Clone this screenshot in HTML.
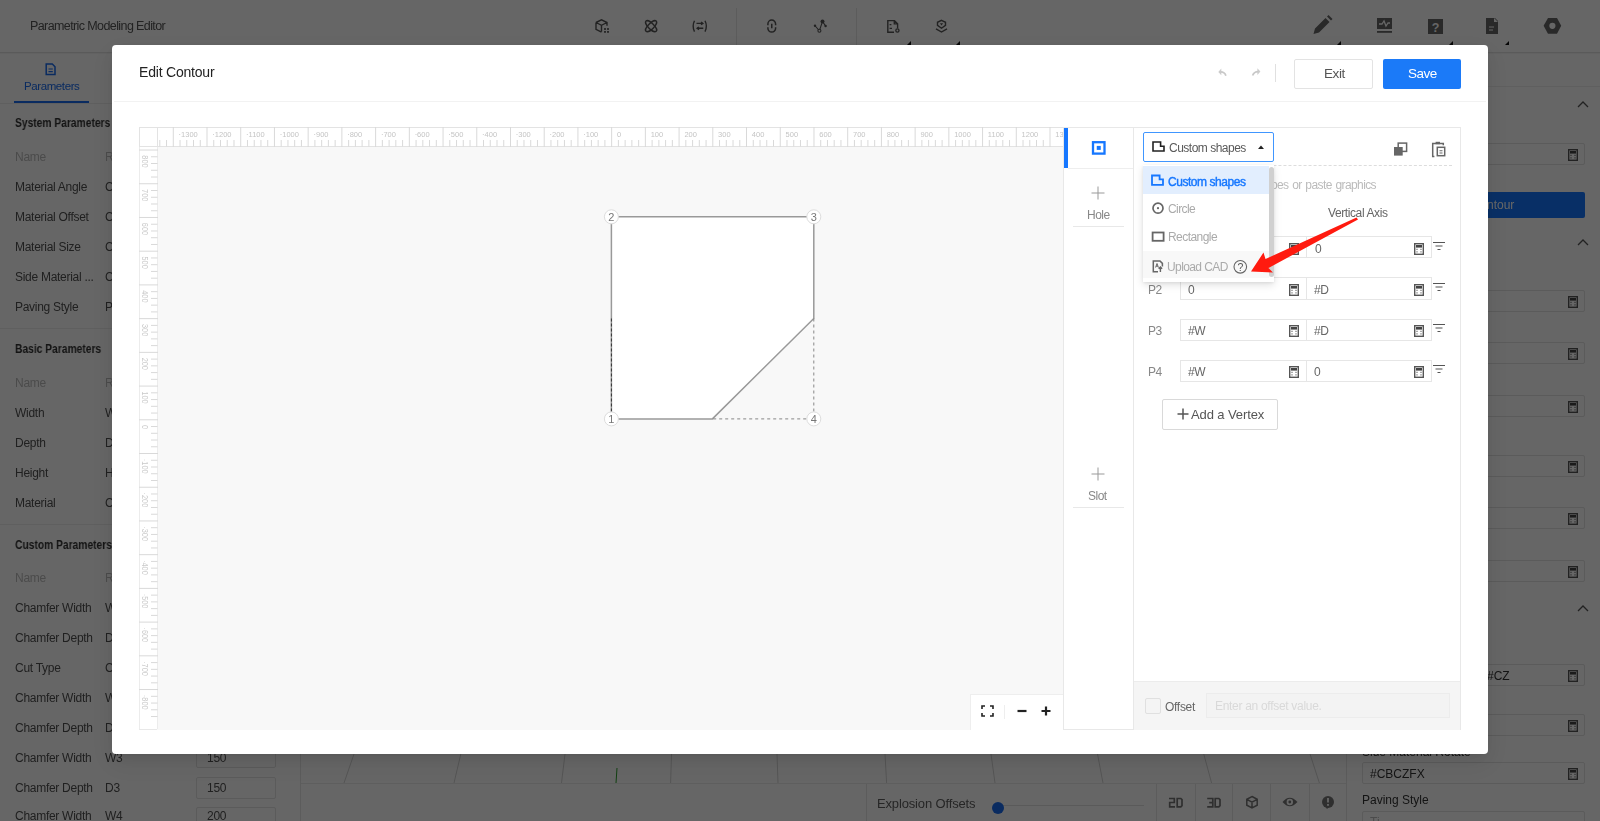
<!DOCTYPE html>
<html><head><meta charset="utf-8">
<style>
*{box-sizing:border-box;margin:0;padding:0}
html,body{width:1600px;height:821px;overflow:hidden;background:#fff;font-family:"Liberation Sans",sans-serif;color:#333}
.t{will-change:transform}
.a{position:absolute}
.t{position:absolute;white-space:nowrap;line-height:1}
#mask{position:absolute;left:0;top:0;width:1600px;height:821px;background:rgba(0,0,0,0.6)}
.lp .t{font-size:12px;letter-spacing:-0.28px;color:#505050}
.lp .g{color:#bbb}
.lp .b{font-weight:bold;letter-spacing:0;transform:scaleX(0.855);transform-origin:0 0;color:#333}
.inp{position:absolute;border:1px solid #e3e3e3;border-radius:2px;background:#fff}
.calc{position:absolute;width:9px;height:11.5px;border:1.4px solid #555;border-radius:0}
.calc:before{content:"";position:absolute;left:1px;top:1px;width:4.2px;height:2.6px;background:#444}
.calc:after{content:"";position:absolute;left:1px;top:5.5px;width:4px;height:2px;border-top:1px dotted #444;border-bottom:1px dotted #444}
</style></head><body>
<div id="bg">
  <!-- header -->
  <div class="a" style="left:0;top:0;width:1600px;height:53px;border-bottom:1px solid #e2e2e2;box-shadow:0 1px 1px rgba(0,0,0,0.04);background:#fff"></div>
  <div class="t" style="left:30px;top:20px;font-size:12.5px;letter-spacing:-0.6px;color:#555">Parametric Modeling Editor</div>
  <div class="a" style="left:736px;top:8px;width:1px;height:44px;background:#e6e6e6"></div>
  <div class="a" style="left:856px;top:8px;width:1px;height:44px;background:#e6e6e6"></div>
  <svg class="a" style="left:580px;top:10px" width="380" height="35" viewBox="0 0 380 35" fill="none" stroke="#555" stroke-width="1.6">
    <!-- cube -->
    <path d="M16 12.5 L21.5 9.8 L27 12.5 L27 15.8 M16 12.5 L16 19.3 L21.5 22.2 M16 12.5 L21.5 15.3 L27 12.5 M21.5 15.3 L21.5 21.5" stroke-width="1.4"/>
    <g fill="#555" stroke="none"><rect x="24.1" y="18.1" width="1.8" height="1.8"/><rect x="27.1" y="18.1" width="1.8" height="1.8"/><rect x="24.1" y="21" width="1.8" height="1.8"/><rect x="27.1" y="21" width="1.8" height="1.8"/></g>
    <!-- atom -->
    <ellipse cx="71.1" cy="16.2" rx="7.2" ry="2.9" transform="rotate(45 71.1 16.2)" stroke-width="1.4"/><ellipse cx="71.1" cy="16.2" rx="7.2" ry="2.9" transform="rotate(-45 71.1 16.2)" stroke-width="1.4"/>
    <!-- (=) -->
    <path d="M114.5 10.8 Q111.8 16.2 114.5 21.6 M125 10.8 Q127.7 16.2 125 21.6 M116.5 13.4 L123 13.4 M117 18.3 L123.3 18.3" stroke-width="1.4"/>
    <path d="M121 12 L123 13.4 L121 14.8 M119 16.9 L117 18.3 L119 19.7" stroke-width="1.2"/>
    <!-- link -->
    <path d="M187.9 15.2 V13.9 A3.85 3.85 0 0 1 195.6 13.9 V15.2 M187.9 17.2 V18.2 A3.85 3.85 0 0 0 195.6 18.2 V17.2 M191.75 13.8 V18.3" stroke-width="1.5"/>
    <!-- graph -->
    <path d="M235 15.75 L239.4 20.75 L242.5 11.4 L245.6 16" stroke-width="1.1"/><circle cx="242.5" cy="11.6" r="2" fill="#555" stroke="none"/><circle cx="235" cy="15.75" r="1.2" fill="#555" stroke="none"/><circle cx="245.6" cy="16" r="1.2" fill="#555" stroke="none"/><circle cx="239.4" cy="20.75" r="1.5" fill="#fff" stroke-width="1.1"/>
    <!-- doc -->
    <path d="M314 22.3 H307.8 V10.6 H314.5 L317.6 13.7 V18.2 M314.3 10.6 V13.9 H317.6" stroke-width="1.4"/><path d="M309.6 14.6 H311.4 M309.6 18.3 H312" stroke-width="1.3"/><circle cx="317.4" cy="20.5" r="1.6" stroke-width="1.3"/>
    <!-- layers -->
    <path d="M361.5 10.3 L365.5 12.3 L365.5 15.3 L361.5 18.2 L357.5 15.3 L357.5 12.3 Z" stroke-width="1.4"/><path d="M359.9 13.3 H363.1 L361.5 15.5 Z" fill="#555" stroke="none"/><path d="M356 18.8 L361.5 22 L367 18.8" stroke-width="1.4"/>
  </svg>
  <svg class="a" style="left:1300px;top:10px" width="300" height="35" viewBox="0 0 300 35">
    <path d="M13.5 24 L15 18.5 L25.5 8 L29.5 12 L19 22.5 Z M27 6.5 L28.5 5 L32.5 9 L31 10.5 Z" fill="#666"/>
    <rect x="77" y="8" width="15" height="11" fill="#666"/><path d="M79 14 L82 14 L84 11 L86 16 L88 13 L90 13" fill="none" stroke="#fff" stroke-width="1.3"/><rect x="77" y="21" width="15" height="1.8" fill="#666"/>
    <rect x="128" y="9" width="15" height="15" fill="#666"/><text x="135.5" y="21.5" font-size="12.5" font-weight="bold" fill="#fff" text-anchor="middle" font-family="Liberation Sans">?</text>
    <path d="M186 8 L195 8 L198 11 L198 24 L186 24 Z" fill="#666"/><path d="M189 17 L194 17 M189 20 L193 20" stroke="#fff" stroke-width="1"/><path d="M194 8 L198 12 L194 12 Z" fill="#fff"/>
    <path d="M243.6 15.8 L248 7.9 L257 7.9 L261.2 15.8 L257 23.7 L248 23.7 Z" fill="#666"/><circle cx="252.4" cy="15.8" r="3.1" fill="#fff"/>
  </svg>

  <div class="a" style="left:907px;top:41px;width:0;height:0;border-left:4px solid transparent;border-bottom:4px solid #111"></div><div class="a" style="left:956px;top:41px;width:0;height:0;border-left:4px solid transparent;border-bottom:4px solid #111"></div><div class="a" style="left:1337px;top:41px;width:0;height:0;border-left:4px solid transparent;border-bottom:4px solid #111"></div><div class="a" style="left:1449px;top:41px;width:0;height:0;border-left:4px solid transparent;border-bottom:4px solid #111"></div><div class="a" style="left:1505px;top:41px;width:0;height:0;border-left:4px solid transparent;border-bottom:4px solid #111"></div>
  <!-- left panel -->
  <div class="lp">
    <div class="a" style="left:300px;top:53px;width:1px;height:768px;background:#e6e6e6"></div>
    <svg class="a" style="left:44px;top:62px" width="14" height="14" viewBox="0 0 14 14" fill="none" stroke="#1a6cf0" stroke-width="1.5">
      <path d="M2.2 2 L8.3 2 L11 4.7 L11 12.6 L2.2 12.6 Z"/><path d="M4.5 7 L8.8 7 M4.5 9.7 L8.8 9.7" stroke-width="1.2"/>
    </svg>
    <div class="t" style="left:24px;top:81px;font-size:11.5px;letter-spacing:-0.4px;color:#1a6cf0">Parameters</div>
    <div class="a" style="left:14px;top:101px;width:75px;height:2px;background:#1a6cf0"></div>
    <div class="a" style="left:0;top:103px;width:300px;height:1px;background:#eee"></div>

    <div class="t b" style="left:15px;top:117px">System Parameters</div>
    <div class="t g" style="left:15px;top:151px">Name</div><div class="t g" style="left:105px;top:151px">R</div>
    <div class="t" style="left:15px;top:181px">Material Angle</div><div class="t" style="left:105px;top:181px">C</div>
    <div class="t" style="left:15px;top:211px">Material Offset</div><div class="t" style="left:105px;top:211px">C</div>
    <div class="t" style="left:15px;top:241px">Material Size</div><div class="t" style="left:105px;top:241px">C</div>
    <div class="t" style="left:15px;top:271px">Side Material ...</div><div class="t" style="left:105px;top:271px">C</div>
    <div class="t" style="left:15px;top:301px">Paving Style</div><div class="t" style="left:105px;top:301px">P</div>
    <div class="a" style="left:0;top:328px;width:300px;height:1px;background:#eee"></div>
    <div class="t b" style="left:15px;top:343px">Basic Parameters</div>
    <div class="t g" style="left:15px;top:377px">Name</div><div class="t g" style="left:105px;top:377px">R</div>
    <div class="t" style="left:15px;top:407px">Width</div><div class="t" style="left:105px;top:407px">W</div>
    <div class="t" style="left:15px;top:437px">Depth</div><div class="t" style="left:105px;top:437px">D</div>
    <div class="t" style="left:15px;top:467px">Height</div><div class="t" style="left:105px;top:467px">H</div>
    <div class="t" style="left:15px;top:497px">Material</div><div class="t" style="left:105px;top:497px">C</div>
    <div class="a" style="left:0;top:524px;width:300px;height:1px;background:#eee"></div>
    <div class="t b" style="left:15px;top:539px">Custom Parameters</div>
    <div class="t g" style="left:15px;top:572px">Name</div><div class="t g" style="left:105px;top:572px">R</div>
    <div class="t" style="left:15px;top:602px">Chamfer Width</div><div class="t" style="left:105px;top:602px">W</div>
    <div class="t" style="left:15px;top:632px">Chamfer Depth</div><div class="t" style="left:105px;top:632px">D</div>
    <div class="t" style="left:15px;top:662px">Cut Type</div><div class="t" style="left:105px;top:662px">C</div>
    <div class="t" style="left:15px;top:692px">Chamfer Width</div><div class="t" style="left:105px;top:692px">W</div>
    <div class="t" style="left:15px;top:722px">Chamfer Depth</div><div class="t" style="left:105px;top:722px">D</div>
    <div class="t" style="left:15px;top:752px">Chamfer Width</div><div class="t" style="left:105px;top:752px">W3</div>
    <div class="inp" style="left:196px;top:746px;width:80px;height:22px"></div><div class="t" style="left:207px;top:752px">150</div>
    <div class="t" style="left:15px;top:782px">Chamfer Depth</div><div class="t" style="left:105px;top:782px">D3</div>
    <div class="inp" style="left:196px;top:777px;width:80px;height:22px"></div><div class="t" style="left:207px;top:782px">150</div>
    <div class="t" style="left:15px;top:810px">Chamfer Width</div><div class="t" style="left:105px;top:810px">W4</div>
    <div class="inp" style="left:196px;top:807px;width:80px;height:22px"></div><div class="t" style="left:207px;top:810px">200</div>
  </div>

  <!-- center 3D bottom -->
  <svg class="a" style="left:301px;top:754px" width="1045" height="30" viewBox="0 0 1045 30" fill="none" stroke="#d4d4d4" stroke-width="1">
    <path d="M53 0 L43 29 M159.8 0 L153 29 M264 0 L260.5 29 M370.5 0 L369.6 29 M476 0 L477 29 M584 0 L585.6 29 M690 0 L694 29 M796.5 0 L802 29 M902.75 0 L910.6 29 M1009 0 L1018.4 29"/>
    <path d="M316 14 L315 29" stroke="#2aa02a"/>
  </svg>
  <div class="a" style="left:301px;top:783px;width:1045px;height:1px;background:#eaeaea"></div>
  <div class="a" style="left:866px;top:784px;width:480px;height:37px;border-left:1px solid #e6e6e6;background:#fff"></div>
  <div class="t" style="left:877px;top:797px;font-size:13px;letter-spacing:-0.15px;color:#606060">Explosion Offsets</div>
  <div class="a" style="left:997px;top:805px;width:147px;height:1px;background:#e0e0e0"></div>
  <div class="a" style="left:992px;top:802px;width:11.5px;height:11.5px;border-radius:6px;background:#1a6cf0"></div>
  <div class="a" style="left:1156px;top:784px;width:1px;height:37px;background:#e6e6e6"></div>
  <div class="a" style="left:1195px;top:784px;width:1px;height:37px;background:#e6e6e6"></div>
  <div class="a" style="left:1232px;top:784px;width:1px;height:37px;background:#e6e6e6"></div>
  <div class="a" style="left:1270px;top:784px;width:1px;height:37px;background:#e6e6e6"></div>
  <div class="a" style="left:1309px;top:784px;width:1px;height:37px;background:#e6e6e6"></div>
  <svg class="a" style="left:1150px;top:785px" width="80" height="36" viewBox="1150 785 80 36" fill="none" stroke="#777" stroke-width="1.7">
    <path d="M1169 798.5 H1174.3 V802.5 H1169.7 V806.8 H1175"/><path d="M1177.2 798.5 H1180.8 L1182 799.7 V805.6 L1180.8 806.8 H1177.2 Z"/>
    <path d="M1207.2 798.5 H1212.8 V806.8 H1207.2 M1209.2 802.6 H1212.8"/><path d="M1215.2 798.5 H1218.8 L1220 799.7 V805.6 L1218.8 806.8 H1215.2 Z"/>
  </svg>

  <!-- right panel -->
  <div class="a" style="left:1346px;top:53px;width:1px;height:768px;background:#e6e6e6"></div>
  <div class="a" style="left:1347px;top:86px;width:253px;height:1px;background:#eee"></div>
  <div class="inp" style="left:1362px;top:143px;width:223px;height:22px"></div>
  <div class="a" style="left:1362px;top:192px;width:223px;height:26px;background:#1677ff;border-radius:2px"></div>
  <div class="t" style="left:1487px;top:199px;font-size:12px;color:#fff">ntour</div>
  <div class="inp" style="left:1362px;top:290px;width:223px;height:22px"></div>
  <div class="inp" style="left:1362px;top:342px;width:223px;height:22px"></div>
  <div class="inp" style="left:1362px;top:395px;width:223px;height:22px"></div>
  <div class="inp" style="left:1362px;top:455px;width:223px;height:22px"></div>
  <div class="inp" style="left:1362px;top:507px;width:223px;height:22px"></div>
  <div class="inp" style="left:1362px;top:560px;width:223px;height:22px"></div>
  <div class="inp" style="left:1362px;top:664px;width:223px;height:22px"></div>
  <div class="t" style="left:1487px;top:670px;font-size:12px;color:#333">#CZ</div>
  <div class="inp" style="left:1362px;top:714px;width:223px;height:22px"></div>
  <div class="t" style="left:1362px;top:746px;font-size:12px;color:#333">Side Material Rotate</div>
  <div class="inp" style="left:1362px;top:762px;width:223px;height:22px"></div>
  <div class="t" style="left:1370px;top:768px;font-size:12px;color:#333">#CBCZFX</div>
  <div class="t" style="left:1362px;top:794px;font-size:12px;color:#333">Paving Style</div>
  <div class="inp" style="left:1362px;top:811px;width:223px;height:22px"></div>
  <svg class="a" style="left:1230px;top:790px" width="110" height="25" viewBox="0 0 110 25">
    <path d="M22 6.5 L27.2 9.3 L27.2 15.2 L22 18 L16.8 15.2 L16.8 9.3 Z M16.8 9.3 L22 12.1 L27.2 9.3 M22 12.1 L22 18" fill="none" stroke="#777" stroke-width="1.5"/>
    <path d="M52.5 12 Q59.7 3.5 67.5 12 Q59.7 20.5 52.5 12 Z" fill="#777"/><circle cx="59.8" cy="12" r="3.2" fill="#fff"/><circle cx="59.8" cy="12" r="1.4" fill="#777"/>
    <circle cx="98" cy="12" r="6" fill="#777"/><path d="M95 16 L97 19 L99 17 Z" fill="#777"/><rect x="97.1" y="8" width="1.8" height="4.5" fill="#fff"/><rect x="97.1" y="14" width="1.8" height="1.8" fill="#fff"/>
  </svg>
  <svg class="a" style="left:1561.5px;top:90px" width="40" height="540" viewBox="0 0 40 540" fill="none" stroke="#555" stroke-width="1.3">
    <path d="M16 17 L21 12 L26 17"/><path d="M16 155 L21 150 L26 155"/><path d="M16 521 L21 516 L26 521"/>
  </svg>
  <svg class="a" style="left:1568px;top:149px" width="10" height="12" viewBox="0 0 10 12"><rect x="0.7" y="0.7" width="8.6" height="10.6" fill="#fff" stroke="#555" stroke-width="1.4"/><rect x="2" y="2" width="6" height="2.6" fill="#444"/><path d="M2.3 6.4 h1.4 M6.3 6.4 h1.4 M2.3 8.8 h1.4 M6.3 8.8 h1.4" stroke="#888" stroke-width="1.2"/></svg>
  <svg class="a" style="left:1568px;top:296px" width="10" height="12" viewBox="0 0 10 12"><rect x="0.7" y="0.7" width="8.6" height="10.6" fill="#fff" stroke="#555" stroke-width="1.4"/><rect x="2" y="2" width="6" height="2.6" fill="#444"/><path d="M2.3 6.4 h1.4 M6.3 6.4 h1.4 M2.3 8.8 h1.4 M6.3 8.8 h1.4" stroke="#888" stroke-width="1.2"/></svg>
  <svg class="a" style="left:1568px;top:348px" width="10" height="12" viewBox="0 0 10 12"><rect x="0.7" y="0.7" width="8.6" height="10.6" fill="#fff" stroke="#555" stroke-width="1.4"/><rect x="2" y="2" width="6" height="2.6" fill="#444"/><path d="M2.3 6.4 h1.4 M6.3 6.4 h1.4 M2.3 8.8 h1.4 M6.3 8.8 h1.4" stroke="#888" stroke-width="1.2"/></svg>
  <svg class="a" style="left:1568px;top:401px" width="10" height="12" viewBox="0 0 10 12"><rect x="0.7" y="0.7" width="8.6" height="10.6" fill="#fff" stroke="#555" stroke-width="1.4"/><rect x="2" y="2" width="6" height="2.6" fill="#444"/><path d="M2.3 6.4 h1.4 M6.3 6.4 h1.4 M2.3 8.8 h1.4 M6.3 8.8 h1.4" stroke="#888" stroke-width="1.2"/></svg>
  <svg class="a" style="left:1568px;top:461px" width="10" height="12" viewBox="0 0 10 12"><rect x="0.7" y="0.7" width="8.6" height="10.6" fill="#fff" stroke="#555" stroke-width="1.4"/><rect x="2" y="2" width="6" height="2.6" fill="#444"/><path d="M2.3 6.4 h1.4 M6.3 6.4 h1.4 M2.3 8.8 h1.4 M6.3 8.8 h1.4" stroke="#888" stroke-width="1.2"/></svg>
  <svg class="a" style="left:1568px;top:513px" width="10" height="12" viewBox="0 0 10 12"><rect x="0.7" y="0.7" width="8.6" height="10.6" fill="#fff" stroke="#555" stroke-width="1.4"/><rect x="2" y="2" width="6" height="2.6" fill="#444"/><path d="M2.3 6.4 h1.4 M6.3 6.4 h1.4 M2.3 8.8 h1.4 M6.3 8.8 h1.4" stroke="#888" stroke-width="1.2"/></svg>
  <svg class="a" style="left:1568px;top:566px" width="10" height="12" viewBox="0 0 10 12"><rect x="0.7" y="0.7" width="8.6" height="10.6" fill="#fff" stroke="#555" stroke-width="1.4"/><rect x="2" y="2" width="6" height="2.6" fill="#444"/><path d="M2.3 6.4 h1.4 M6.3 6.4 h1.4 M2.3 8.8 h1.4 M6.3 8.8 h1.4" stroke="#888" stroke-width="1.2"/></svg>
  <svg class="a" style="left:1568px;top:670px" width="10" height="12" viewBox="0 0 10 12"><rect x="0.7" y="0.7" width="8.6" height="10.6" fill="#fff" stroke="#555" stroke-width="1.4"/><rect x="2" y="2" width="6" height="2.6" fill="#444"/><path d="M2.3 6.4 h1.4 M6.3 6.4 h1.4 M2.3 8.8 h1.4 M6.3 8.8 h1.4" stroke="#888" stroke-width="1.2"/></svg>
  <svg class="a" style="left:1568px;top:720px" width="10" height="12" viewBox="0 0 10 12"><rect x="0.7" y="0.7" width="8.6" height="10.6" fill="#fff" stroke="#555" stroke-width="1.4"/><rect x="2" y="2" width="6" height="2.6" fill="#444"/><path d="M2.3 6.4 h1.4 M6.3 6.4 h1.4 M2.3 8.8 h1.4 M6.3 8.8 h1.4" stroke="#888" stroke-width="1.2"/></svg>
  <svg class="a" style="left:1568px;top:768px" width="10" height="12" viewBox="0 0 10 12"><rect x="0.7" y="0.7" width="8.6" height="10.6" fill="#fff" stroke="#555" stroke-width="1.4"/><rect x="2" y="2" width="6" height="2.6" fill="#444"/><path d="M2.3 6.4 h1.4 M6.3 6.4 h1.4 M2.3 8.8 h1.4 M6.3 8.8 h1.4" stroke="#888" stroke-width="1.2"/></svg>
  <div class="t" style="left:1370px;top:816px;font-size:12px;color:#bbb">Ti</div>

</div>
<div id="mask"></div>

<div id="modal" class="a" style="left:112px;top:45px;width:1376px;height:709px;background:#fff;border-radius:4px;box-shadow:0 6px 16px rgba(0,0,0,0.08),0 3px 6px -4px rgba(0,0,0,0.12),0 9px 28px 8px rgba(0,0,0,0.05)"></div>
<div id="m">
  <div class="t" style="left:139px;top:65px;font-size:14px;letter-spacing:-0.2px;color:#222">Edit Contour</div>
  <div class="a" style="left:114px;top:101px;width:1372px;height:1px;background:#f2f2f2"></div>
  <svg class="a" style="left:1214px;top:64px" width="50" height="18" viewBox="0 0 50 18" fill="none" stroke="#c8c8c8" stroke-width="1.4">
    <path d="M4.3 7.9 L7.3 4.6 L7.3 11.2 Z" fill="#ccc" stroke="none"/><path d="M6.5 7.9 Q10.8 7.9 11.9 11.8" stroke-width="1.7"/>
    <path d="M46.4 7.6 L43.4 4.3 L43.4 10.9 Z" fill="#ccc" stroke="none"/><path d="M44.2 7.6 Q39.9 7.6 38.6 11.6" stroke-width="1.7"/>
  </svg>
  <div class="a" style="left:1275px;top:64px;width:1px;height:18px;background:#e0e0e0"></div>
  <div class="a" style="left:1294px;top:59px;width:79px;height:30px;border:1px solid #e3e3e3;border-radius:2px;background:#fff"></div>
  <div class="t" style="left:1324px;top:67px;font-size:13.5px;letter-spacing:-0.4px;color:#555">Exit</div>
  <div class="a" style="left:1383px;top:59px;width:78px;height:30px;border-radius:2px;background:#1b7af8"></div>
  <div class="t" style="left:1408px;top:67px;font-size:13.5px;letter-spacing:-0.5px;color:#fff">Save</div>

  <!-- canvas -->
  <div class="a" style="left:139px;top:127px;width:1322px;height:603px;border:1px solid #e8e8e8"></div>
  <div class="a" style="left:157px;top:147px;width:907px;height:583px;background:#f8f8f8"></div>
  <svg class="a" style="left:139px;top:127px" width="924" height="20" viewBox="0 0 924 20"><rect x="0" y="0" width="924" height="20" fill="#fff"/><path d="M0 0.5 H924 M0 19.5 H924" stroke="#e3e3e3" stroke-width="1"/><path d="M20.80 13 V19.5 M27.55 13 V19.5 M34.29 0 V20 M41.03 13 V19.5 M47.78 13 V19.5 M54.52 13 V19.5 M61.27 13 V19.5 M68.01 0 V20 M74.75 13 V19.5 M81.50 13 V19.5 M88.24 13 V19.5 M94.99 13 V19.5 M101.73 0 V20 M108.47 13 V19.5 M115.22 13 V19.5 M121.96 13 V19.5 M128.71 13 V19.5 M135.45 0 V20 M142.19 13 V19.5 M148.94 13 V19.5 M155.68 13 V19.5 M162.43 13 V19.5 M169.17 0 V20 M175.91 13 V19.5 M182.66 13 V19.5 M189.40 13 V19.5 M196.15 13 V19.5 M202.89 0 V20 M209.63 13 V19.5 M216.38 13 V19.5 M223.12 13 V19.5 M229.87 13 V19.5 M236.61 0 V20 M243.35 13 V19.5 M250.10 13 V19.5 M256.84 13 V19.5 M263.59 13 V19.5 M270.33 0 V20 M277.07 13 V19.5 M283.82 13 V19.5 M290.56 13 V19.5 M297.31 13 V19.5 M304.05 0 V20 M310.79 13 V19.5 M317.54 13 V19.5 M324.28 13 V19.5 M331.03 13 V19.5 M337.77 0 V20 M344.51 13 V19.5 M351.26 13 V19.5 M358.00 13 V19.5 M364.75 13 V19.5 M371.49 0 V20 M378.23 13 V19.5 M384.98 13 V19.5 M391.72 13 V19.5 M398.47 13 V19.5 M405.21 0 V20 M411.95 13 V19.5 M418.70 13 V19.5 M425.44 13 V19.5 M432.19 13 V19.5 M438.93 0 V20 M445.67 13 V19.5 M452.42 13 V19.5 M459.16 13 V19.5 M465.91 13 V19.5 M472.65 0 V20 M479.39 13 V19.5 M486.14 13 V19.5 M492.88 13 V19.5 M499.63 13 V19.5 M506.37 0 V20 M513.11 13 V19.5 M519.86 13 V19.5 M526.60 13 V19.5 M533.35 13 V19.5 M540.09 0 V20 M546.83 13 V19.5 M553.58 13 V19.5 M560.32 13 V19.5 M567.07 13 V19.5 M573.81 0 V20 M580.55 13 V19.5 M587.30 13 V19.5 M594.04 13 V19.5 M600.79 13 V19.5 M607.53 0 V20 M614.27 13 V19.5 M621.02 13 V19.5 M627.76 13 V19.5 M634.51 13 V19.5 M641.25 0 V20 M647.99 13 V19.5 M654.74 13 V19.5 M661.48 13 V19.5 M668.23 13 V19.5 M674.97 0 V20 M681.71 13 V19.5 M688.46 13 V19.5 M695.20 13 V19.5 M701.95 13 V19.5 M708.69 0 V20 M715.43 13 V19.5 M722.18 13 V19.5 M728.92 13 V19.5 M735.67 13 V19.5 M742.41 0 V20 M749.15 13 V19.5 M755.90 13 V19.5 M762.64 13 V19.5 M769.39 13 V19.5 M776.13 0 V20 M782.87 13 V19.5 M789.62 13 V19.5 M796.36 13 V19.5 M803.11 13 V19.5 M809.85 0 V20 M816.59 13 V19.5 M823.34 13 V19.5 M830.08 13 V19.5 M836.83 13 V19.5 M843.57 0 V20 M850.31 13 V19.5 M857.06 13 V19.5 M863.80 13 V19.5 M870.55 13 V19.5 M877.29 0 V20 M884.03 13 V19.5 M890.78 13 V19.5 M897.52 13 V19.5 M904.27 13 V19.5 M911.01 0 V20" stroke="#d9d9d9" stroke-width="1"/><g font-family="Liberation Sans" font-size="7.5" fill="#c4c4c4"><text x="39.59" y="9.5" >·1300</text><text x="73.31" y="9.5" >·1200</text><text x="107.03" y="9.5" >·1100</text><text x="140.75" y="9.5" >·1000</text><text x="174.47" y="9.5" >·900</text><text x="208.19" y="9.5" >·800</text><text x="241.91" y="9.5" >·700</text><text x="275.63" y="9.5" >·600</text><text x="309.35" y="9.5" >·500</text><text x="343.07" y="9.5" >·400</text><text x="376.79" y="9.5" >·300</text><text x="410.51" y="9.5" >·200</text><text x="444.23" y="9.5" >·100</text><text x="477.95" y="9.5" >0</text><text x="511.67" y="9.5" >100</text><text x="545.39" y="9.5" >200</text><text x="579.11" y="9.5" >300</text><text x="612.83" y="9.5" >400</text><text x="646.55" y="9.5" >500</text><text x="680.27" y="9.5" >600</text><text x="713.99" y="9.5" >700</text><text x="747.71" y="9.5" >800</text><text x="781.43" y="9.5" >900</text><text x="815.15" y="9.5" >1000</text><text x="848.87" y="9.5" >1100</text><text x="882.59" y="9.5" >1200</text><text x="916.31" y="9.5" >1300</text></g><rect x="0" y="0" width="18.5" height="20" fill="#fff"/><path d="M0.5 0 V20 M18.5 0 V20 M0 0.5 H19 M0 19.5 H19" stroke="#e3e3e3"/></svg>
  <svg class="a" style="left:139px;top:147px" width="19" height="582" viewBox="0 0 19 582"><rect x="0" y="0" width="19" height="582" fill="#fff"/><path d="M0.5 0 V582 M18.5 0 V582" stroke="#ececec" stroke-width="1"/><path d="M0 542.56 H19 M12 549.30 H18.5 M12 556.05 H18.5 M12 562.79 H18.5 M12 569.54 H18.5 M0 508.84 H19 M12 515.58 H18.5 M12 522.33 H18.5 M12 529.07 H18.5 M12 535.82 H18.5 M0 475.12 H19 M12 481.86 H18.5 M12 488.61 H18.5 M12 495.35 H18.5 M12 502.10 H18.5 M0 441.40 H19 M12 448.14 H18.5 M12 454.89 H18.5 M12 461.63 H18.5 M12 468.38 H18.5 M0 407.68 H19 M12 414.42 H18.5 M12 421.17 H18.5 M12 427.91 H18.5 M12 434.66 H18.5 M0 373.96 H19 M12 380.70 H18.5 M12 387.45 H18.5 M12 394.19 H18.5 M12 400.94 H18.5 M0 340.24 H19 M12 346.98 H18.5 M12 353.73 H18.5 M12 360.47 H18.5 M12 367.22 H18.5 M0 306.52 H19 M12 313.26 H18.5 M12 320.01 H18.5 M12 326.75 H18.5 M12 333.50 H18.5 M0 272.80 H19 M12 279.54 H18.5 M12 286.29 H18.5 M12 293.03 H18.5 M12 299.78 H18.5 M0 239.08 H19 M12 245.82 H18.5 M12 252.57 H18.5 M12 259.31 H18.5 M12 266.06 H18.5 M0 205.36 H19 M12 212.10 H18.5 M12 218.85 H18.5 M12 225.59 H18.5 M12 232.34 H18.5 M0 171.64 H19 M12 178.38 H18.5 M12 185.13 H18.5 M12 191.87 H18.5 M12 198.62 H18.5 M0 137.92 H19 M12 144.66 H18.5 M12 151.41 H18.5 M12 158.15 H18.5 M12 164.90 H18.5 M0 104.20 H19 M12 110.94 H18.5 M12 117.69 H18.5 M12 124.43 H18.5 M12 131.18 H18.5 M0 70.48 H19 M12 77.22 H18.5 M12 83.97 H18.5 M12 90.71 H18.5 M12 97.46 H18.5 M0 36.76 H19 M12 43.50 H18.5 M12 50.25 H18.5 M12 56.99 H18.5 M12 63.74 H18.5 M0 3.04 H19 M12 9.78 H18.5 M12 16.53 H18.5 M12 23.27 H18.5 M12 30.02 H18.5" stroke="#d9d9d9" stroke-width="1"/><g font-family="Liberation Sans" font-size="8.8" fill="#cacaca"><text transform="translate(2.6 547.86) rotate(90) scale(0.84 1)">·800</text><text transform="translate(2.6 514.14) rotate(90) scale(0.84 1)">·700</text><text transform="translate(2.6 480.42) rotate(90) scale(0.84 1)">·600</text><text transform="translate(2.6 446.70) rotate(90) scale(0.84 1)">·500</text><text transform="translate(2.6 412.98) rotate(90) scale(0.84 1)">·400</text><text transform="translate(2.6 379.26) rotate(90) scale(0.84 1)">·300</text><text transform="translate(2.6 345.54) rotate(90) scale(0.84 1)">·200</text><text transform="translate(2.6 311.82) rotate(90) scale(0.84 1)">·100</text><text transform="translate(2.6 278.10) rotate(90) scale(0.84 1)">0</text><text transform="translate(2.6 244.38) rotate(90) scale(0.84 1)">100</text><text transform="translate(2.6 210.66) rotate(90) scale(0.84 1)">200</text><text transform="translate(2.6 176.94) rotate(90) scale(0.84 1)">300</text><text transform="translate(2.6 143.22) rotate(90) scale(0.84 1)">400</text><text transform="translate(2.6 109.50) rotate(90) scale(0.84 1)">500</text><text transform="translate(2.6 75.78) rotate(90) scale(0.84 1)">600</text><text transform="translate(2.6 42.06) rotate(90) scale(0.84 1)">700</text><text transform="translate(2.6 8.34) rotate(90) scale(0.84 1)">800</text></g></svg>
  <svg class="a" style="left:580px;top:190px" width="260" height="250" viewBox="0 0 260 250">
    <path d="M31.4 228.9 L31.4 26.8 L233.8 26.8 L233.8 128.5 L132.4 228.9 Z" fill="#fff" stroke="#999" stroke-width="1.5"/>
    <path d="M233.8 128.5 L233.8 228.9 L132.4 228.9" fill="none" stroke="#888" stroke-width="1" stroke-dasharray="3 3"/>
    <path d="M31.4 128.5 L31.4 228.9" fill="none" stroke="#333" stroke-width="1" stroke-dasharray="3 2"/>
    <g fill="#fff" stroke="#ddd" stroke-width="1">
      <circle cx="31.4" cy="26.8" r="7"/><circle cx="233.8" cy="26.8" r="7"/><circle cx="31.4" cy="228.9" r="7"/><circle cx="233.8" cy="228.9" r="7"/>
    </g>
    <g font-family="Liberation Sans" font-size="11" fill="#777" text-anchor="middle">
      <text x="31.4" y="30.8">2</text><text x="233.8" y="30.8">3</text><text x="31.4" y="232.9">1</text><text x="233.8" y="232.9">4</text>
    </g>
  </svg>
  <!-- zoom controls -->
  <div class="a" style="left:970px;top:694px;width:94px;height:36px;background:#fff;border-top:1px solid #eee;border-left:1px solid #eee"></div>
  <svg class="a" style="left:970px;top:694px" width="94" height="36" viewBox="0 0 94 36" fill="none" stroke="#222" stroke-width="1.6">
    <path d="M12 15 V12 H15 M20 12 H23 V15 M23 19 V22 H20 M15 22 H12 V19"/>
    <path d="M34.5 11 V25" stroke="#eee" stroke-width="1"/>
    <path d="M47.5 17 H56.5" stroke-width="2.2"/>
    <path d="M71.5 17 H80.5 M76 12.5 V21.5" stroke-width="2.2"/>
  </svg>

  <!-- tool strip -->
  <div class="a" style="left:1063px;top:127px;width:1px;height:603px;background:#e8e8e8"></div>
  <div class="a" style="left:1133px;top:127px;width:1px;height:603px;background:#e8e8e8"></div>
  <div class="a" style="left:1064px;top:128px;width:4px;height:40px;background:#1677ff"></div>
  <div class="a" style="left:1068px;top:168px;width:65px;height:1px;background:#eee"></div>
  <svg class="a" style="left:1090px;top:140px" width="16" height="16" viewBox="0 0 16 16">
    <rect x="3" y="2.2" width="11.5" height="11.4" fill="none" stroke="#1677ff" stroke-width="2.3"/>
    <rect x="6.75" y="5.9" width="4" height="4" fill="#1677ff"/>
  </svg>
  <svg class="a" style="left:1090px;top:185px" width="16" height="16" viewBox="0 0 16 16"><path d="M8 1.5 V14.5 M1.5 8 H14.5" stroke="#999" stroke-width="1"/></svg>
  <div class="t" style="left:1087px;top:209px;font-size:12px;letter-spacing:-0.5px;color:#888">Hole</div>
  <div class="a" style="left:1073px;top:226px;width:51px;height:1px;background:#e8e8e8"></div>
  <svg class="a" style="left:1090px;top:466px" width="16" height="16" viewBox="0 0 16 16"><path d="M8 1.5 V14.5 M1.5 8 H14.5" stroke="#999" stroke-width="1"/></svg>
  <div class="t" style="left:1088px;top:490px;font-size:12px;letter-spacing:-0.5px;color:#888">Slot</div>
  <div class="a" style="left:1073px;top:507px;width:51px;height:1px;background:#e8e8e8"></div>

  <!-- right form -->
  <div class="a" style="left:1143px;top:132px;width:131px;height:30px;border:1px solid #4096ff;border-radius:2px;background:#fff"></div>
  <svg class="a" style="left:1151px;top:140px" width="16" height="14" viewBox="0 0 16 14" fill="none" stroke="#222" stroke-width="1.6">
    <path d="M2 2 H9.6 V6.2 H13 V11 H2 Z"/>
  </svg>
  <div class="t" style="left:1169px;top:142px;font-size:12px;letter-spacing:-0.5px;color:#595959">Custom shapes</div>
  <svg class="a" style="left:1256px;top:143px" width="10" height="8" viewBox="0 0 10 8"><path d="M2 6 L5 2.5 L8 6 Z" fill="#222"/></svg>

  <svg class="a" style="left:1390px;top:138px" width="60" height="22" viewBox="0 0 60 22">
    <rect x="8.2" y="5.1" width="8.4" height="8.3" fill="none" stroke="#666" stroke-width="1.5"/>
    <rect x="4" y="9" width="8.7" height="8.6" fill="#666"/>
    <path d="M44.4 18.4 H42.7 V5.4 H53.3 V7.2" fill="none" stroke="#666" stroke-width="1.5"/><rect x="45.6" y="3.8" width="4.4" height="2.4" fill="#666"/>
    <rect x="47.3" y="9.3" width="7.4" height="8.4" fill="#fff" stroke="#666" stroke-width="1.5"/><path d="M49.5 12.7 H52.5 M49.5 15 H52.5" stroke="#666" stroke-width="1.1"/>
  </svg>
  <div class="a" style="left:1143px;top:165px;width:309px;height:0;border-top:1px dashed #ddd"></div>
  <div class="t" style="right:224px;top:179px;font-size:12px;letter-spacing:-0.6px;word-spacing:1px;color:#bbb">Draw shapes or paste graphics</div>
  <div class="t" style="left:1328px;top:207px;font-size:12px;letter-spacing:-0.4px;color:#666">Vertical Axis</div>

  <div class="t" style="left:1148px;top:243px;font-size:12px;color:#888">P1</div>
  <div class="inp" style="left:1180px;top:236px;width:127px;height:22px;border-color:#e6e6e6;border-radius:0"></div>
  <div class="inp" style="left:1306px;top:236px;width:126px;height:22px;border-color:#e6e6e6;border-radius:0"></div>
  <div class="t" style="left:1315px;top:243px;font-size:12px;color:#666">0</div>

  <div class="t" style="left:1148px;top:284px;font-size:12px;letter-spacing:-0.4px;color:#888">P2</div>
  <div class="inp" style="left:1180px;top:277px;width:127px;height:23px;border-color:#e6e6e6;border-radius:0"></div>
  <div class="inp" style="left:1306px;top:277px;width:126px;height:23px;border-color:#e6e6e6;border-radius:0"></div>
  <div class="t" style="left:1188px;top:284px;font-size:12px;color:#666">0</div>
  <div class="t" style="left:1314px;top:284px;font-size:12px;letter-spacing:-0.4px;color:#666">#D</div>

  <div class="t" style="left:1148px;top:325px;font-size:12px;letter-spacing:-0.4px;color:#888">P3</div>
  <div class="inp" style="left:1180px;top:319px;width:127px;height:22px;border-color:#e6e6e6;border-radius:0"></div>
  <div class="inp" style="left:1306px;top:319px;width:126px;height:22px;border-color:#e6e6e6;border-radius:0"></div>
  <div class="t" style="left:1188px;top:325px;font-size:12px;letter-spacing:-0.4px;color:#666">#W</div>
  <div class="t" style="left:1314px;top:325px;font-size:12px;letter-spacing:-0.4px;color:#666">#D</div>

  <div class="t" style="left:1148px;top:366px;font-size:12px;letter-spacing:-0.4px;color:#888">P4</div>
  <div class="inp" style="left:1180px;top:360px;width:127px;height:22px;border-color:#e6e6e6;border-radius:0"></div>
  <div class="inp" style="left:1306px;top:360px;width:126px;height:22px;border-color:#e6e6e6;border-radius:0"></div>
  <div class="t" style="left:1188px;top:366px;font-size:12px;letter-spacing:-0.4px;color:#666">#W</div>
  <div class="t" style="left:1314px;top:366px;font-size:12px;color:#666">0</div>

  <svg class="a" style="left:1289px;top:243px" width="10" height="12" viewBox="0 0 10 12"><rect x="0.7" y="0.7" width="8.6" height="10.6" fill="#fff" stroke="#555" stroke-width="1.4"/><rect x="2" y="2" width="6" height="2.6" fill="#444"/><path d="M2.3 6.4 h1.4 M6.3 6.4 h1.4 M2.3 8.8 h1.4 M6.3 8.8 h1.4" stroke="#888" stroke-width="1.2"/></svg><svg class="a" style="left:1414px;top:243px" width="10" height="12" viewBox="0 0 10 12"><rect x="0.7" y="0.7" width="8.6" height="10.6" fill="#fff" stroke="#555" stroke-width="1.4"/><rect x="2" y="2" width="6" height="2.6" fill="#444"/><path d="M2.3 6.4 h1.4 M6.3 6.4 h1.4 M2.3 8.8 h1.4 M6.3 8.8 h1.4" stroke="#888" stroke-width="1.2"/></svg>
  <svg class="a" style="left:1289px;top:284px" width="10" height="12" viewBox="0 0 10 12"><rect x="0.7" y="0.7" width="8.6" height="10.6" fill="#fff" stroke="#555" stroke-width="1.4"/><rect x="2" y="2" width="6" height="2.6" fill="#444"/><path d="M2.3 6.4 h1.4 M6.3 6.4 h1.4 M2.3 8.8 h1.4 M6.3 8.8 h1.4" stroke="#888" stroke-width="1.2"/></svg><svg class="a" style="left:1414px;top:284px" width="10" height="12" viewBox="0 0 10 12"><rect x="0.7" y="0.7" width="8.6" height="10.6" fill="#fff" stroke="#555" stroke-width="1.4"/><rect x="2" y="2" width="6" height="2.6" fill="#444"/><path d="M2.3 6.4 h1.4 M6.3 6.4 h1.4 M2.3 8.8 h1.4 M6.3 8.8 h1.4" stroke="#888" stroke-width="1.2"/></svg>
  <svg class="a" style="left:1289px;top:325px" width="10" height="12" viewBox="0 0 10 12"><rect x="0.7" y="0.7" width="8.6" height="10.6" fill="#fff" stroke="#555" stroke-width="1.4"/><rect x="2" y="2" width="6" height="2.6" fill="#444"/><path d="M2.3 6.4 h1.4 M6.3 6.4 h1.4 M2.3 8.8 h1.4 M6.3 8.8 h1.4" stroke="#888" stroke-width="1.2"/></svg><svg class="a" style="left:1414px;top:325px" width="10" height="12" viewBox="0 0 10 12"><rect x="0.7" y="0.7" width="8.6" height="10.6" fill="#fff" stroke="#555" stroke-width="1.4"/><rect x="2" y="2" width="6" height="2.6" fill="#444"/><path d="M2.3 6.4 h1.4 M6.3 6.4 h1.4 M2.3 8.8 h1.4 M6.3 8.8 h1.4" stroke="#888" stroke-width="1.2"/></svg>
  <svg class="a" style="left:1289px;top:366px" width="10" height="12" viewBox="0 0 10 12"><rect x="0.7" y="0.7" width="8.6" height="10.6" fill="#fff" stroke="#555" stroke-width="1.4"/><rect x="2" y="2" width="6" height="2.6" fill="#444"/><path d="M2.3 6.4 h1.4 M6.3 6.4 h1.4 M2.3 8.8 h1.4 M6.3 8.8 h1.4" stroke="#888" stroke-width="1.2"/></svg><svg class="a" style="left:1414px;top:366px" width="10" height="12" viewBox="0 0 10 12"><rect x="0.7" y="0.7" width="8.6" height="10.6" fill="#fff" stroke="#555" stroke-width="1.4"/><rect x="2" y="2" width="6" height="2.6" fill="#444"/><path d="M2.3 6.4 h1.4 M6.3 6.4 h1.4 M2.3 8.8 h1.4 M6.3 8.8 h1.4" stroke="#888" stroke-width="1.2"/></svg>
  <svg class="a" style="left:1432px;top:238.7px" width="14" height="140" viewBox="0 0 14 140" fill="none" stroke="#555" stroke-width="1.2">
    <path d="M1 3.5 H13 M3.5 7 H10.5 M5.5 10.5 H8.5"/>
    <path d="M1 44.5 H13 M3.5 48 H10.5 M5.5 51.5 H8.5"/>
    <path d="M1 85.5 H13 M3.5 89 H10.5 M5.5 92.5 H8.5"/>
    <path d="M1 126.5 H13 M3.5 130 H10.5 M5.5 133.5 H8.5"/>
  </svg>

  <div class="a" style="left:1162px;top:399px;width:116px;height:31px;border:1px solid #d9d9d9;border-radius:2px;background:#fff"></div>
  <svg class="a" style="left:1176px;top:407px" width="14" height="14" viewBox="0 0 14 14"><path d="M7 1.5 V12.5 M1.5 7 H12.5" stroke="#555" stroke-width="1.5"/></svg>
  <div class="t" style="left:1191px;top:408px;font-size:13px;letter-spacing:-0.1px;color:#555">Add a Vertex</div>

  <!-- footer -->
  <div class="a" style="left:1134px;top:681px;width:326px;height:49px;background:#f5f5f5;border-top:1px solid #ececec"></div>
  <div class="a" style="left:1145px;top:698px;width:16px;height:16px;background:#f4f4f4;border:1px solid #e0e0e0;border-radius:2px"></div>
  <div class="t" style="left:1165px;top:701px;font-size:12px;letter-spacing:-0.3px;color:#666">Offset</div>
  <div class="a" style="left:1206px;top:693px;width:244px;height:25px;background:#f3f3f3;border:1px solid #ececec;border-radius:0"></div>
  <div class="t" style="left:1215px;top:700px;font-size:12px;letter-spacing:-0.3px;color:#d9d9d9">Enter an offset value.</div>

  <!-- dropdown menu -->
  <div class="a" style="left:1143px;top:165px;width:131px;height:117px;background:#fff;box-shadow:0 3px 8px rgba(0,0,0,0.12),0 1px 3px rgba(0,0,0,0.08)"></div>
  <div class="a" style="left:1143px;top:166px;width:126px;height:28px;background:#e2eefe"></div>
  <div class="a" style="left:1143px;top:251px;width:126px;height:27px;background:#f8f8f8"></div>
  <div class="a" style="left:1269px;top:167px;width:5px;height:110px;background:#d0d0d0;border-radius:3px"></div>
  <svg class="a" style="left:1150px;top:172px" width="18" height="105" viewBox="0 0 18 105" fill="none">
    <path d="M2 3.5 H9.6 V7.4 H13 V12.8 H2 Z" stroke="#1677ff" stroke-width="1.8"/>
    <circle cx="8" cy="36.2" r="5" stroke="#666" stroke-width="1.7"/><circle cx="8" cy="36.2" r="1.1" fill="#666"/>
    <rect x="2.6" y="60.5" width="11" height="8.3" stroke="#666" stroke-width="1.8"/>
    <path d="M8 99.7 H3.3 V89 H10 L12.4 91.4 V94.5" stroke="#666" stroke-width="1.5"/><path d="M5.6 95.5 L7 91.5 L8.4 95.5 M6.1 94.2 H7.9" stroke="#666" stroke-width="1"/><path d="M10.4 100 V95 M8.7 96.7 L10.4 95 L12.1 96.7" stroke="#666" stroke-width="1.4"/>
  </svg>
  <div class="t" style="left:1168px;top:176px;font-size:12px;letter-spacing:-0.45px;color:#1677ff;-webkit-text-stroke:0.4px #1677ff">Custom shapes</div>
  <div class="t" style="left:1168px;top:203px;font-size:12px;letter-spacing:-0.6px;color:#aaa">Circle</div>
  <div class="t" style="left:1168px;top:231px;font-size:12px;letter-spacing:-0.55px;color:#aaa">Rectangle</div>
  <div class="t" style="left:1167px;top:261px;font-size:12px;letter-spacing:-0.6px;color:#aaa">Upload CAD</div>
  <svg class="a" style="left:1232px;top:258px" width="16" height="16" viewBox="0 0 16 16">
    <circle cx="8.3" cy="8.8" r="6.3" fill="none" stroke="#666" stroke-width="1.1"/>
    <text x="8.3" y="12.5" font-size="10.5" font-family="Liberation Sans" fill="#555" text-anchor="middle">?</text>
  </svg>

  <!-- red arrow -->
  <svg class="a" style="left:1240px;top:205px" width="130" height="80" viewBox="0 0 130 80">
    <path d="M116.5 12.5 L118 14.5 L28.5 63 L33 67.5 L11 66.5 L23.5 47.5 L25.5 54 Z" fill="#ff1a0f"/>
  </svg>
</div>
</body></html>
